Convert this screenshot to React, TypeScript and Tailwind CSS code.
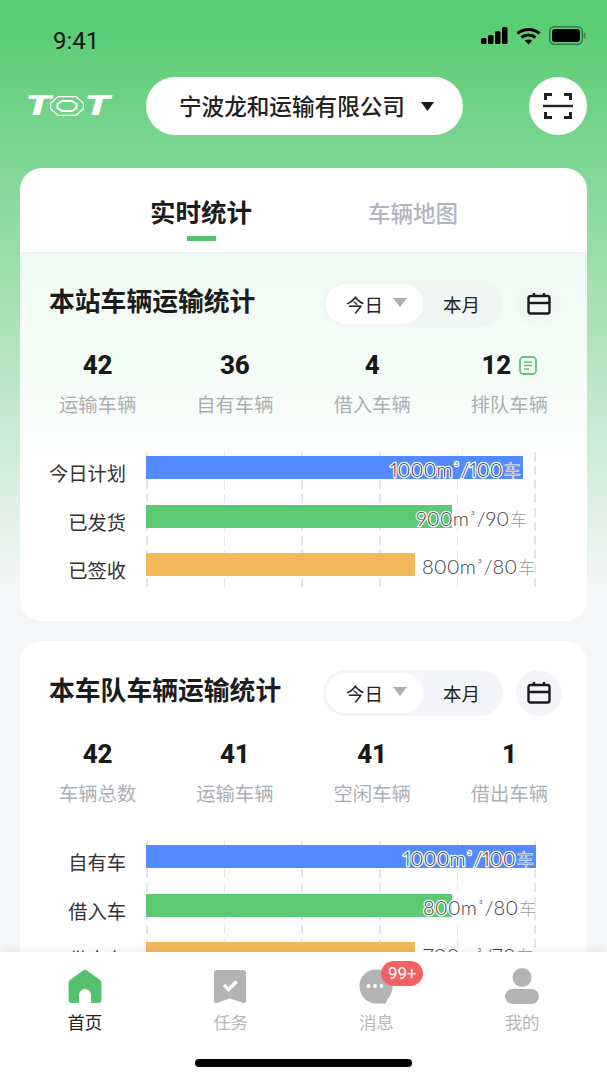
const cjk = "[font-family:'Noto_Sans_CJK_SC',sans-serif]";

interface Bar {
  label: string;
  color: string;
  width: number;
  textLeft: number;
  amount: string;
  count: string;
}

interface StatsSectionProps {
  title: string;
  stats: { value: string; label: string; note?: boolean }[];
  bars: Bar[];
  tinted?: boolean;
}

const stationStats = [
  { value: "42", label: "运输车辆" },
  { value: "36", label: "自有车辆" },
  { value: "4", label: "借入车辆" },
  { value: "12", label: "排队车辆", note: true },
];

const fleetStats = [
  { value: "42", label: "车辆总数" },
  { value: "41", label: "运输车辆" },
  { value: "41", label: "空闲车辆" },
  { value: "1", label: "借出车辆" },
];

const stationBars: Bar[] = [
  { label: "今日计划", color: "#528bff", width: 377, textLeft: 244, amount: "1000", count: "100" },
  { label: "已发货", color: "#5cc974", width: 306, textLeft: 270, amount: "900", count: "90" },
  { label: "已签收", color: "#f2b95c", width: 269, textLeft: 276, amount: "800", count: "80" },
];

const fleetBars: Bar[] = [
  { label: "自有车", color: "#528bff", width: 390, textLeft: 257, amount: "1000", count: "100" },
  { label: "借入车", color: "#5cc974", width: 306, textLeft: 277, amount: "800", count: "80" },
  { label: "借出车", color: "#f2b95c", width: 269, textLeft: 277, amount: "700", count: "70" },
];

function StatusBar() {
  return (
    <div className="flex h-[77px] items-start pl-[53px] pr-[21px] pt-[26px]">
      <span className="font-['Roboto',sans-serif] text-[24px] leading-[30px] text-[#111]">9:41</span>
      <div className="ml-auto flex items-center gap-[8px]">
        <svg width="27" height="17" viewBox="0 0 27 17" fill="#000">
          <rect x="0" y="11" width="5.5" height="6" rx="1.5" />
          <rect x="7" y="8" width="5.5" height="9" rx="1.5" />
          <rect x="14" y="4" width="5.5" height="13" rx="1.5" />
          <rect x="21" y="0" width="5.5" height="17" rx="1.5" />
        </svg>
        <svg width="25" height="18" viewBox="0 0 25 18" fill="none" stroke="#000" strokeWidth="3">
          <path d="M1.5 6.5C7.5 1 17.5 1 23.5 6.5" />
          <path d="M5.5 10.5C9.5 7 15.5 7 19.5 10.5" />
          <path d="M12.5 17.5L8.8 13.6C10.8 12 14.2 12 16.2 13.6Z" fill="#000" stroke="none" />
        </svg>
        <svg width="37" height="19" viewBox="0 0 37 19">
          <rect x="0.75" y="0.75" width="32.5" height="17.5" rx="4.5" fill="none" stroke="#2f7a45" strokeWidth="1.5" />
          <rect x="3" y="3" width="28" height="13" rx="3" fill="#000" />
          <rect x="34.5" y="6.5" width="2" height="6" rx="1" fill="#3a8a52" />
        </svg>
      </div>
    </div>
  );
}

function Logo() {
  const letter = "inline-block font-['Roboto',sans-serif] text-[27px] font-black italic leading-none text-white scale-x-[1.55]";
  return (
    <div className="flex w-[120px] items-center">
      <span className={`${letter} ml-[4px]`}>T</span>
      <svg className="ml-[3px]" width="34" height="20" viewBox="0 0 34 20" fill="none" stroke="#fff">
        <path d="M8 0.7H26L33.300 7V13L26 19.300H8L0.700 13V7Z" strokeWidth="1.2" />
        <path d="M12 5H22L26.500 8V12L22 15H12L7.500 12V8Z" strokeWidth="2" />
      </svg>
      <span className={`${letter} ml-[5px]`}>T</span>
    </div>
  );
}

function Header() {
  return (
    <div className="flex items-center pl-[26px] pr-[20px]">
      <Logo />
      <div className="flex h-[58px] w-[317px] items-center rounded-full bg-white pl-[33px]">
        <span className={`${cjk} text-[22.6px] font-medium leading-none text-[#222]`}>宁波龙和运输有限公司</span>
        <svg className="ml-[16px]" width="13" height="9" viewBox="0 0 13 9" fill="#1a1a1a">
          <path d="M0 0H13L6.5 9Z" />
        </svg>
      </div>
      <div className="ml-auto flex h-[58px] w-[58px] items-center justify-center rounded-full bg-white">
        <svg width="30" height="28" viewBox="0 0 30 28" fill="none" stroke="#222" strokeWidth="3">
          <path d="M2.500 8V2.500H9" />
          <path d="M21 2.500H27.500V8" />
          <path d="M2.500 20V25.500H9" />
          <path d="M21 25.500H27.500V20" />
          <path d="M0 14H30" strokeWidth="2.400" />
        </svg>
      </div>
    </div>
  );
}

function Tabs() {
  return (
    <div className="flex h-[85px] border-b border-[#eef1f4] pl-[110px]">
      <div className="flex w-[142px] flex-col items-center pt-[24px]">
        <span className={`${cjk} text-[25.5px] font-bold leading-[38px] text-[#1c1c1c]`}>实时统计</span>
        <div className="mt-[6px] h-[5px] w-[29px] bg-[#55c06e]" />
      </div>
      <div className="ml-[96px] pt-[25px]">
        <span className={`${cjk} text-[22.5px] font-medium leading-[38px] text-[#b2b5bf]`}>车辆地图</span>
      </div>
    </div>
  );
}

function RangeSwitch({ tinted }: { tinted?: boolean }) {
  return (
    <div className={`flex h-[46px] w-[180px] items-center rounded-full pl-[3px] ${tinted ? "bg-[#f1f6f5]" : "bg-[#f3f5f9]"}`}>
      <div className="flex h-[40px] w-[97px] items-center rounded-full bg-white pl-[20px]">
        <span className={`${cjk} text-[18.5px] leading-none text-[#222]`}>今日</span>
        <svg className="ml-[10px] -mt-[3px]" width="14" height="9" viewBox="0 0 14 9" fill="#a9adb5">
          <path d="M0 0H14L7 9Z" />
        </svg>
      </div>
      <span className={`${cjk} ml-[20px] text-[18.5px] leading-none text-[#222]`}>本月</span>
    </div>
  );
}

function CalendarButton({ tinted }: { tinted?: boolean }) {
  return (
    <div className={`ml-[13px] flex h-[46px] w-[46px] items-center justify-center rounded-full ${tinted ? "bg-[#f1f8f4]" : "bg-[#f3f5f9]"}`}>
      <svg width="24" height="24" viewBox="0 0 24 24" fill="none" stroke="#1a1a1a" strokeWidth="2.4">
        <rect x="1.5" y="4" width="21" height="17.5" rx="2" />
        <path d="M1.5 11H22.5" />
        <path d="M7 1V5" />
        <path d="M17 1V5" />
      </svg>
    </div>
  );
}

function NoteIcon() {
  return (
    <svg width="18" height="19" viewBox="0 0 18 19" fill="none" stroke="#5cc974" strokeWidth="1.8">
      <rect x="1" y="1" width="16" height="17" rx="3.5" />
      <path d="M5 6H13M5 9.5H13M5 13H10" strokeWidth="1.6" />
    </svg>
  );
}

function BarChart({ bars }: { bars: Bar[] }) {
  return (
    <div className="mt-[33px] flex">
      <div className="flex w-[106px] flex-col gap-[25.5px] pt-[10px]">
        {bars.map((bar) => (
          <div key={bar.label} className={`${cjk} h-[23px] text-right text-[19.3px] leading-[23px] text-[#333]`}>
            {bar.label}
          </div>
        ))}
      </div>
      <div className="relative ml-[20px] h-[138px] w-[390px]">
        <div className="absolute inset-0 flex justify-between">
          {[0, 1, 2, 3, 4, 5].map((line) => (
            <div
              key={line}
              className="h-full w-[1.5px] bg-[repeating-linear-gradient(180deg,#e4e6e9_0,#e4e6e9_9px,transparent_9px,transparent_14px)]"
            />
          ))}
        </div>
        <div className="relative flex flex-col gap-[25.5px] pt-[4px]">
          {bars.map((bar) => (
            <div key={bar.label} className="relative h-[23px]">
              <div className="h-full" style={{ width: bar.width, backgroundColor: bar.color }} />
              <span
                className="absolute top-0 whitespace-nowrap font-['Lato',sans-serif] text-[20px] font-light leading-[23px] text-[#3c3c3c] proportional-nums [paint-order:stroke_fill] [-webkit-text-stroke:2.5px_#fff]"
                style={{ left: bar.textLeft }}
              >
                {bar.amount}m<span className="mx-[2px] text-[12px] align-[5px]">³</span>/{bar.count}
                <span className={`${cjk} ml-[1px] text-[17px] font-light text-[#9a9a9a] [-webkit-text-stroke:1px_#fff]`}>车</span>
              </span>
            </div>
          ))}
        </div>
      </div>
    </div>
  );
}

function StatsSection({ title, stats, bars, tinted }: StatsSectionProps) {
  return (
    <div className={tinted ? "bg-[linear-gradient(180deg,#eefbf1_0,#f5fcf7_120px,#fff_220px)] pt-[28px]" : "pt-[29px]"}>
      <div className="flex h-[46px] items-center pl-[29px] pr-[25px]">
        <span className={`${cjk} -mt-[9px] text-[25.8px] font-bold leading-none text-[#1c1c1c]`}>{title}</span>
        <div className="ml-auto flex items-center">
          <RangeSwitch tinted={tinted} />
          <CalendarButton tinted={tinted} />
        </div>
      </div>
      <div className="mt-[22px] grid grid-cols-4 px-[9px]">
        {stats.map((stat) => (
          <div key={stat.label} className="flex flex-col items-center">
            <div className="flex items-center gap-[8px] font-['Roboto',sans-serif] text-[26px] font-extrabold leading-[32px] text-[#171a17]">
              {stat.value}
              {stat.note && <NoteIcon />}
            </div>
            <div className={`${cjk} mt-[8px] text-[19.3px] leading-[30px] text-[#abafb5]`}>{stat.label}</div>
          </div>
        ))}
      </div>
      <BarChart bars={bars} />
      <div className="h-[31px]" />
    </div>
  );
}

function NavIcon({ name }: { name: string }) {
  if (name === "home") {
    return (
      <svg width="36" height="36" viewBox="0 0 36 36">
        <path d="M16 2.6a3.4 3.4 0 0 1 4 0l13 9.4a3.4 3.4 0 0 1 1.400 2.800V32a3 3 0 0 1-3 3H4.600a3 3 0 0 1-3-3V14.800A3.400 3.400 0 0 1 3 12Z" fill="#55c06e" />
        <path d="M12 35V27a6 6 0 0 1 12 0V35Z" fill="#fff" />
      </svg>
    );
  }
  if (name === "task") {
    return (
      <svg width="34" height="36" viewBox="0 0 34 36">
        <path d="M4 2H30a3 3 0 0 1 3 3V33a2 2 0 0 1-2.600 1.900L17 30.500 3.600 34.900A2 2 0 0 1 1 33V5a3 3 0 0 1 3-3Z" fill="#b3b3b3" />
        <path d="M11 17L15.500 21.500 23.500 13.500" fill="none" stroke="#fff" strokeWidth="3.400" />
      </svg>
    );
  }
  if (name === "message") {
    return (
      <svg width="36" height="36" viewBox="0 0 36 36">
        <path d="M18 1.500C27.400 1.500 34.500 9 34.500 18c0 6-2.500 10.500-5 13.500l-2 4H18C8.600 35.500 1.500 27.500 1.500 18S8.600 1.500 18 1.500Z" fill="#b3b3b3" />
        <circle cx="10.500" cy="18" r="1.900" fill="#fff" />
        <circle cx="17" cy="18" r="1.900" fill="#fff" />
        <circle cx="23.500" cy="18" r="1.900" fill="#fff" />
      </svg>
    );
  }
  return (
    <svg width="36" height="36" viewBox="0 0 36 36" fill="#b3b3b3">
      <circle cx="18" cy="9.500" r="9.500" />
      <rect x="1" y="21" width="34" height="15" rx="7.500" />
    </svg>
  );
}

function BottomNav() {
  const items = [
    { name: "home", label: "首页", active: true },
    { name: "task", label: "任务" },
    { name: "message", label: "消息", badge: "99+" },
    { name: "user", label: "我的" },
  ];
  return (
    <div className="absolute inset-x-0 bottom-0 h-[128px] bg-white shadow-[0_-3px_8px_rgba(0,0,0,0.05)]">
      <div className="grid grid-cols-4 px-[12px] pt-[16px]">
        {items.map((item) => (
          <div key={item.name} className="flex flex-col items-center">
            <div className="relative h-[36px] w-[36px]">
              <NavIcon name={item.name} />
              {item.badge && (
                <span className="absolute left-[23px] top-[-7px] flex h-[25px] w-[42px] items-center justify-center rounded-full bg-[#f26262] font-['Roboto',sans-serif] text-[17px] leading-none text-white">
                  {item.badge}
                </span>
              )}
            </div>
            <span className={`${cjk} mt-[6px] text-[17.5px] leading-[24px] ${item.active ? "text-[#222]" : "text-[#b8b8b8]"}`}>
              {item.label}
            </span>
          </div>
        ))}
      </div>
      <div className="mx-auto mt-[25px] h-[8px] w-[217px] rounded-full bg-black" />
    </div>
  );
}

export default function App() {
  return (
    <div className="relative h-[1080px] w-[607px] overflow-hidden bg-[linear-gradient(180deg,#57cc72_0,#5bcd75_30px,#f5f6f8_590px)]">
      <StatusBar />
      <Header />
      <div className="mx-[20px] mt-[33px] overflow-hidden rounded-[22px] bg-white">
        <Tabs />
        <StatsSection title="本站车辆运输统计" stats={stationStats} bars={stationBars} tinted />
      </div>
      <div className="mx-[20px] mt-[20px] overflow-hidden rounded-[22px] bg-white">
        <StatsSection title="本车队车辆运输统计" stats={fleetStats} bars={fleetBars} />
      </div>
      <BottomNav />
    </div>
  );
}
